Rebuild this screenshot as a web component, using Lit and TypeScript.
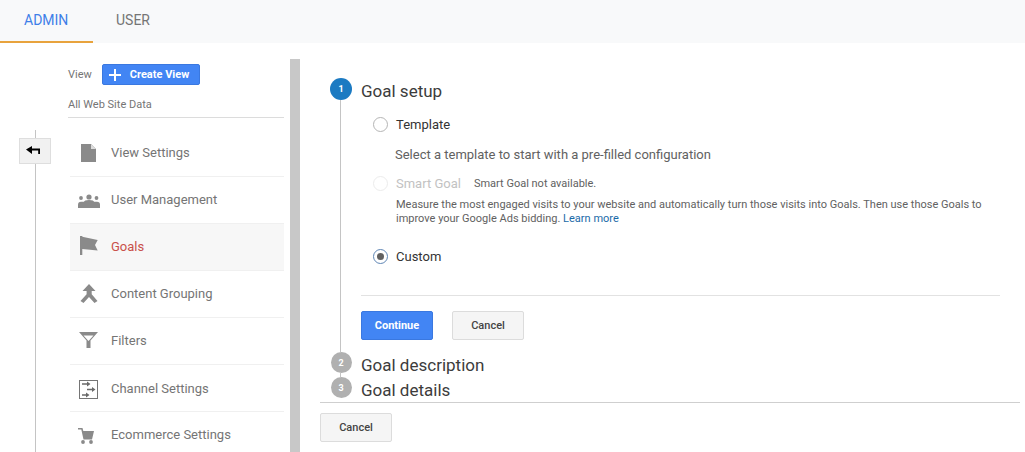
import { LitElement, html, css, svg } from "lit";
import { customElement } from "lit/decorators.js";

const ic = (c: unknown) => html`<svg class="ic" viewBox="0 0 24 24" width="24" height="24">${c}</svg>`;
const icons = {
  doc: svg`<path fill="#8a8a8a" d="M5 3h10l5 5v13H5z"/><path fill="#dcdcdc" d="M15 3l5 5h-5z"/>`,
  users: svg`<g fill="#8a8a8a"><circle cx="5" cy="10" r="1.9"/><circle cx="13" cy="9" r="2.6"/><circle cx="20.5" cy="10" r="1.9"/><path d="M2 20v-3.5q0-2.5 3-2.8h16q3 .3 3 2.8V20z"/><path d="M8 14q0-2 5-2t5 2z"/></g>`,
  flag: svg`<path fill="#8a8a8a" d="M4 1h2.3v19H4zM6.3 1.7L21.7 5 19 10l2.7 5.6L6.3 14z"/>`,
  merge: svg`<path fill="#8a8a8a" d="M13 2l6.500 7h-3.800v3.200L21.500 19l-3 2-5.500-6-5.500 6-3-2 6.100-6.800V9H6.500z"/>`,
  filter: svg`<path fill="#8a8a8a" fill-rule="evenodd" d="M3 3h19l-7.500 8.500V19h-4v-7.500zM7.500 6.500l5 5.500 5-5.500z"/>`,
  channel: svg`<rect x="3.500" y="4.500" width="18" height="18" fill="none" stroke="#757575"/><g fill="#6a6a6a"><path d="M6 7.200h5V5.500l3.500 2.500-3.500 2.500V8.800H6zM11 12.700h5V11l3.500 2.500L16 16v-1.700h-5zM6 18.200h4v-1.700l3.500 2.500-3.500 2.500v-1.700H6z"/></g>`,
  cart: svg`<g fill="#8a8a8a"><path d="M2 5h4.500l.8 3H18l-2 8.500H7.500L5.300 6.500H2z"/><circle cx="7" cy="19" r="1.900"/><circle cx="15" cy="19" r="1.900"/></g>`,
};

const rows: [string, unknown][] = [
  ["View Settings", icons.doc],
  ["User Management", icons.users],
  ["Goals", icons.flag],
  ["Content Grouping", icons.merge],
  ["Filters", icons.filter],
  ["Channel Settings", icons.channel],
  ["Ecommerce Settings", icons.cart],
];

@customElement("app-root")
export class AppRoot extends LitElement {
  static styles = css`
    :host { display: block; width: 1025px; height: 452px; overflow: hidden; background: #fff; font-family: Roboto, "Liberation Sans", sans-serif; color: #757575; }
    * { box-sizing: border-box; }
    .tabs { display: flex; height: 43px; background: #f8f9fa; }
    .tab { height: 43px; display: flex; align-items: center; padding: 0 24px 3px; font-size: 14px; width: 93px; color: #757575; }
    .tab.on { color: #3f7fe8; border-bottom: 2px solid #e8a33d; padding-bottom: 1px; }
    .tab.user { padding-left: 23px; }
    .page { display: flex; height: 409px; }
    .rail { position: relative; width: 68px; flex: none; padding: 95px 0 0 19px; }
    .rail::before { content: ""; position: absolute; left: 35px; top: 87px; bottom: 0; width: 1px; background: #c4c4c4; }
    .back { position: relative; width: 32px; height: 26px; background: #f1f1f1; border: 1px solid #dedede; display: flex; align-items: center; justify-content: center; }
    .nav { width: 216px; flex: none; padding-top: 21px; }
    .vhead { display: flex; align-items: center; height: 21px; font-size: 11px; gap: 10px; }
    .create { width: 98px; height: 21px; border-radius: 2px; background: #4285f4; border: 1px solid #3a78e0; color: #fff; font-weight: 700; font-size: 11px; display: flex; align-items: center; padding-left: 5px; gap: 8px; }
    .acct { height: 33px; border-bottom: 1px solid #dcdcdc; font-size: 11px; display: flex; align-items: center; padding-top: 6px; }
    .list { margin: 12px 0 0 2px; }
    .row { height: 47px; display: flex; align-items: center; gap: 11px; padding: 0 0 1px 6px; border-bottom: 1px solid #f0f0f0; font-size: 13px; }
    .row:nth-child(6) { padding-bottom: 0; }
    .row.on { background: #f7f7f7; color: #c9504a; }
    .ic { display: block; flex: none; }
    .bar { width: 10px; flex: none; margin: 16px 0 0 6px; background: #c8c8c8; }
    .main { margin-left: 20px; width: 700px; flex: none; }
    .steps { padding: 35px 20px 0 10px; height: 359px; }
    .step { display: flex; gap: 9px; height: 25px; }
    .step.open { height: 274px; }
    .mark { width: 22px; flex: none; display: flex; flex-direction: column; align-items: center; }
    .num { width: 21px; height: 21px; border-radius: 50%; background: #b0b0b0; color: #fff; font-size: 9px; font-weight: 700; display: flex; align-items: center; justify-content: center; flex: none; }
    .open .num { width: 22px; height: 22px; background: #1b7ac2; }
    .line { flex: 1; width: 1px; background: #c4c4c4; margin-right: 1px; }
    .body { flex: 1; min-width: 0; }
    .title { height: 22px; line-height: 26px; font-size: 17px; color: #3c3c3c; }
    .opt { display: flex; align-items: center; gap: 8px; height: 20px; margin-left: 12px; font-size: 13px; color: #333; }
    .radio { width: 15px; height: 15px; border-radius: 50%; border: 1px solid #b5b5b5; background: #fff; display: flex; align-items: center; justify-content: center; flex: none; }
    .radio.off { border-color: #ececec; }
    .radio.sel { border-color: #5f86b5; }
    .radio.sel::after { content: ""; width: 7px; height: 7px; border-radius: 50%; background: #616161; }
    .t { margin-top: 14px; }
    .desc { height: 20px; line-height: 20px; margin: 11px 0 0 34px; font-size: 13px; color: #616161; }
    .s { margin-top: 8px; color: #c2c2c2; }
    .note { font-size: 11px; color: #616161; margin-left: 5px; }
    .more { margin: 5px 0 0 35px; font-size: 11px; line-height: 14px; color: #616161; height: 28px; white-space: nowrap; }
    .more a { color: #1a6aa8; text-decoration: none; }
    .c { margin-top: 20px; }
    hr { border: 0; height: 1px; background: #e2e2e2; margin: 29px 0 0; }
    .btns { display: flex; gap: 19px; margin-top: 15px; }
    .btn { width: 72px; height: 29px; border-radius: 2px; font-size: 11px; font-weight: 500; display: flex; align-items: center; justify-content: center; background: #f5f5f5; border: 1px solid #dcdcdc; color: #444; }
    .btn.pri { background: #4285f4; border-color: #3a78e0; color: #fff; font-weight: 700; }
    .foot { border-top: 1px solid #cfcfcf; padding-top: 10px; }
  `;

  render() {
    return html`
      <div class="tabs"><div class="tab on">ADMIN</div><div class="tab user">USER</div></div>
      <div class="page">
        <div class="rail">
          <div class="back"><svg width="18" height="12" viewBox="-1 0 18 12"><path fill="#000" d="M-1 4.600L5 1v2.600h8V9h-1.800V5.600H5V9z"/></svg></div>
        </div>
        <div class="nav">
          <div class="vhead"><span>View</span>
            <div class="create"><svg width="14" height="14" viewBox="0 0 14 14"><path fill="#fff" d="M6 1h2v5h5v2H8v5H6V8H1V6h5z"/></svg><span>Create View</span></div>
          </div>
          <div class="acct">All Web Site Data</div>
          <div class="list">
            ${rows.map(([n, i]) => html`<div class="row ${n === "Goals" ? "on" : ""}">${ic(i)}<span>${n}</span></div>`)}
          </div>
        </div>
        <div class="bar"></div>
        <div class="main">
          <div class="steps">
            <div class="step open">
              <div class="mark"><div class="num">1</div><div class="line"></div></div>
              <div class="body">
                <div class="title">Goal setup</div>
                <div class="opt t"><span class="radio"></span>Template</div>
                <div class="desc">Select a template to start with a pre-filled configuration</div>
                <div class="opt s"><span class="radio off"></span>Smart Goal<span class="note">Smart Goal not available.</span></div>
                <div class="more">Measure the most engaged visits to your website and automatically turn those visits into Goals. Then use those Goals to<br>improve your Google Ads bidding. <a>Learn more</a></div>
                <div class="opt c"><span class="radio sel"></span>Custom</div>
                <hr>
                <div class="btns"><div class="btn pri">Continue</div><div class="btn">Cancel</div></div>
              </div>
            </div>
            <div class="step">
              <div class="mark"><div class="num">2</div><div class="line"></div></div>
              <div class="body"><div class="title">Goal description</div></div>
            </div>
            <div class="step">
              <div class="mark"><div class="num">3</div></div>
              <div class="body"><div class="title">Goal details</div></div>
            </div>
          </div>
          <div class="foot"><div class="btn">Cancel</div></div>
        </div>
      </div>
    `;
  }
}
